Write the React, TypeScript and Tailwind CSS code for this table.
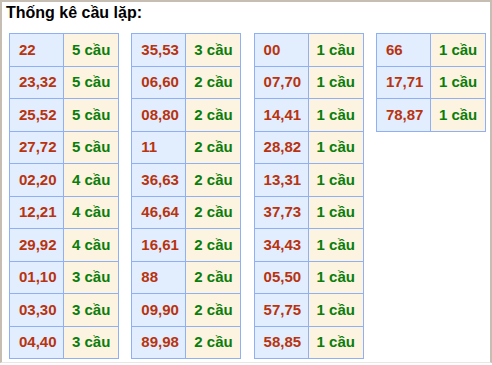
type Row = [string, number];

const tables: Row[][] = [
  [['22', 5], ['23,32', 5], ['25,52', 5], ['27,72', 5], ['02,20', 4], ['12,21', 4], ['29,92', 4], ['01,10', 3], ['03,30', 3], ['04,40', 3]],
  [['35,53', 3], ['06,60', 2], ['08,80', 2], ['11', 2], ['36,63', 2], ['46,64', 2], ['16,61', 2], ['88', 2], ['09,90', 2], ['89,98', 2]],
  [['00', 1], ['07,70', 1], ['14,41', 1], ['28,82', 1], ['13,31', 1], ['37,73', 1], ['34,43', 1], ['05,50', 1], ['57,75', 1], ['58,85', 1]],
  [['66', 1], ['17,71', 1], ['78,87', 1]],
];

function CauTable({ rows }: { rows: Row[] }) {
  return (
    <div className="w-[110px] border-l border-t border-[#8fb0f5] self-start">
      {rows.map(([pair, count]) => (
        <div key={pair} className="flex h-[32.5px]">
          <div className="w-[54px] flex items-center pl-[9px] bg-[#e2edfd] border-r border-b border-[#8fb0f5] text-[#b8330f]">
            {pair}
          </div>
          <div className="flex-1 flex items-center pl-[8px] bg-[#fdf3e1] border-r border-b border-[#8fb0f5] text-[#0a7d0a]">
            {count} cầu
          </div>
        </div>
      ))}
    </div>
  );
}

export default function App() {
  return (
    <div className="w-[492px] h-[365px] bg-white font-['Liberation_Sans',Arial,sans-serif]">
      <div className="h-[363px] border-x-2 border-t-2 border-b border-x-[#c6bdb3] border-t-[#c6bdb3] border-b-[#e9e6e3]">
        <h1 className="pl-[4px] pt-[1px] h-[31px] text-[16px] font-bold text-black leading-[20px]">Thống kê cầu lặp:</h1>
        <div className="flex gap-[12.3px] pl-[7px] text-[15px] font-bold">
          {tables.map((rows, i) => (
            <CauTable key={i} rows={rows} />
          ))}
        </div>
      </div>
    </div>
  );
}
